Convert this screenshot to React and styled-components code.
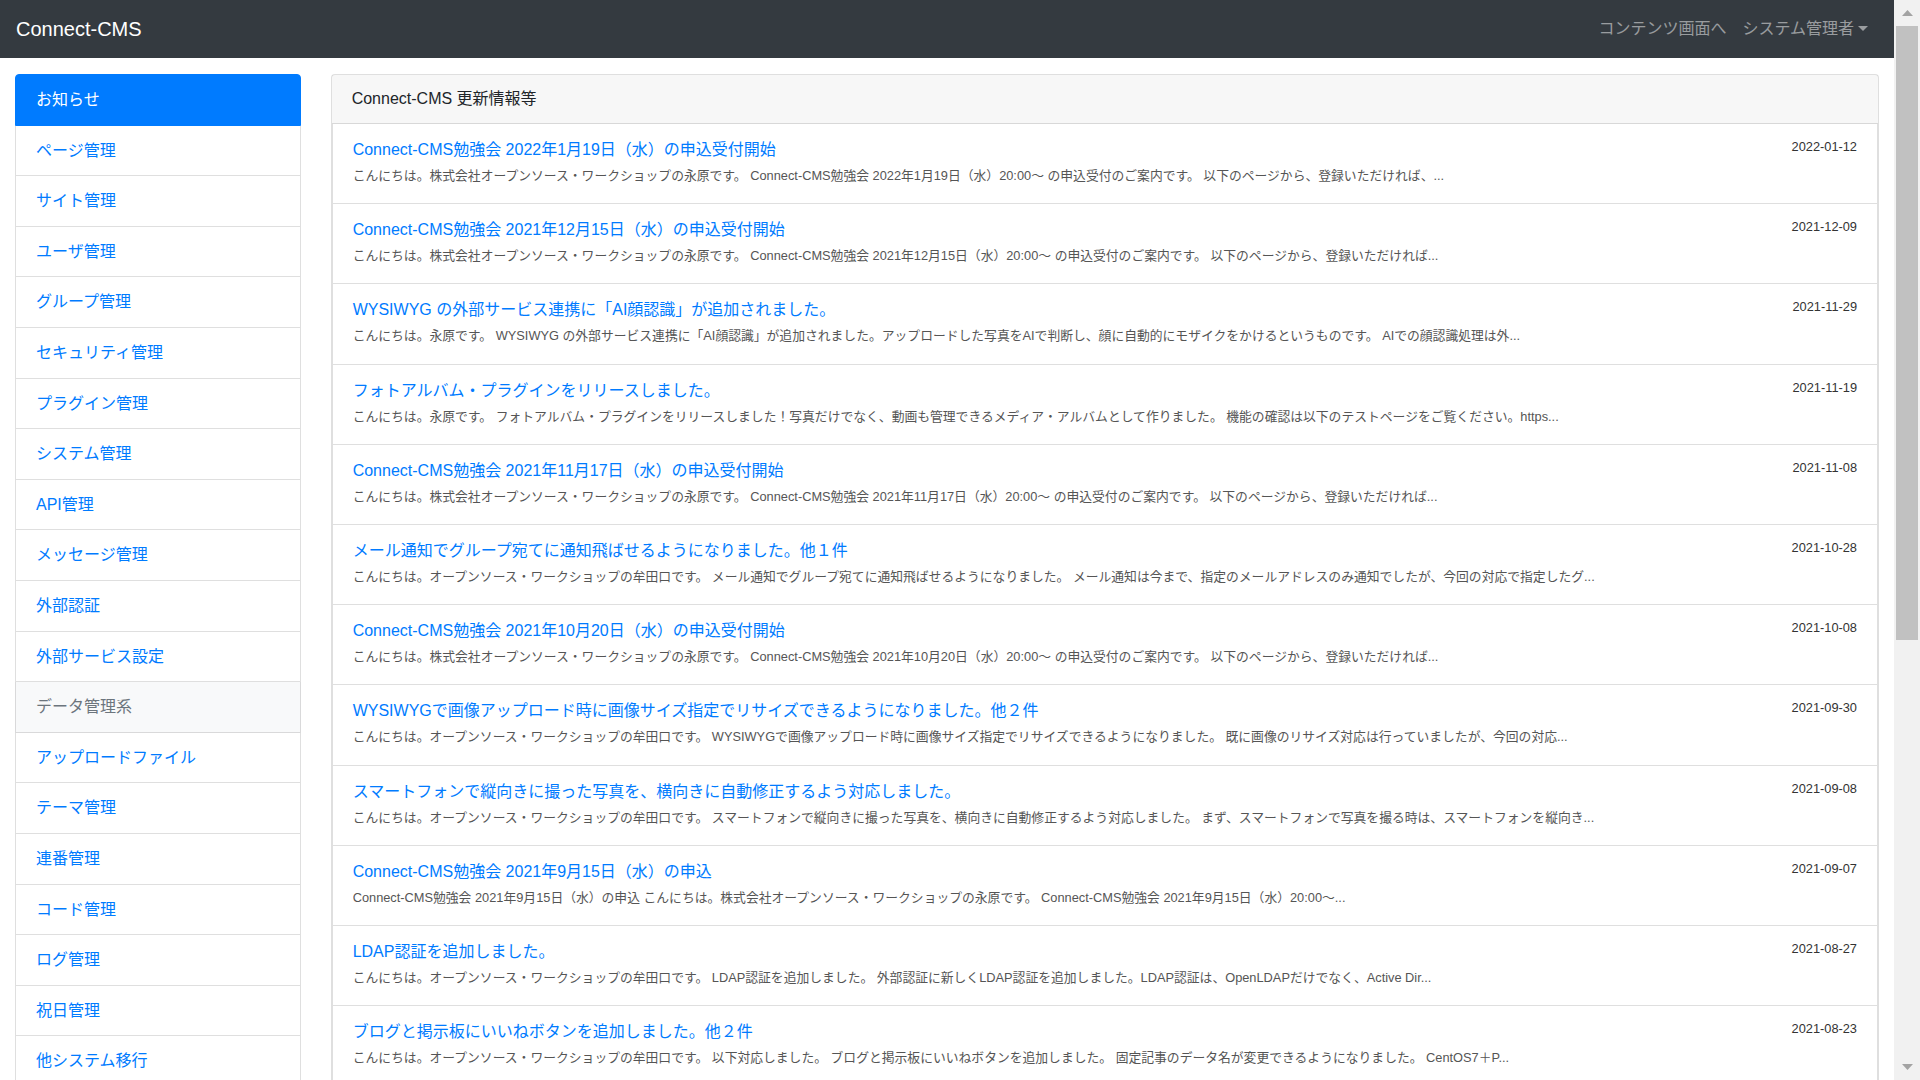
import React from "react";
import styled, { createGlobalStyle, css } from "styled-components";

const GlobalStyle = createGlobalStyle`
  html, body {
    margin: 0;
    padding: 0;
    overflow: hidden;
    background: #fff;
  }
  body {
    font-family: "Liberation Sans", "Noto Sans CJK JP", sans-serif;
    font-size: 16px;
    line-height: 1.5;
    color: #212529;
  }
  * { box-sizing: border-box; }
`;

const Viewport = styled.div`
  display: flex;
  height: 100vh;
  overflow: hidden;
`;

const Page = styled.div`
  flex: 1;
  min-width: 0;
  overflow: hidden;
`;

const Navbar = styled.nav`
  height: 58px;
  background: #343a40;
  display: flex;
  align-items: center;
  justify-content: space-between;
  padding: 0 18px 0 16px;
`;

const Brand = styled.a`
  font-size: 20px;
  line-height: 30px;
  color: #fff;
  text-decoration: none;
  padding-bottom: 1px;
`;

const NavLinks = styled.div`
  display: flex;
  align-items: center;
`;

const NavLink = styled.a`
  padding: 8px;
  font-size: 16px;
  line-height: 24px;
  color: rgba(255, 255, 255, 0.5);
  text-decoration: none;
  display: inline-flex;
  align-items: center;
`;

const Caret = styled.span`
  display: inline-block;
  margin-left: 4px;
  width: 0;
  height: 0;
  border-top: 5px solid rgba(255, 255, 255, 0.5);
  border-left: 5px solid transparent;
  border-right: 5px solid transparent;
  margin-top: -2px;
`;

const Container = styled.div`
  display: flex;
  margin-top: 16px;
`;

const SideCol = styled.div`
  flex: 0 0 16.6667%;
  max-width: 16.6667%;
  padding: 0 15px;
`;

const MainCol = styled.div`
  flex: 1;
  min-width: 0;
  padding: 0 15px;
`;

const SideList = styled.div`
  display: flex;
  flex-direction: column;
`;

const SideItem = styled.a`
  display: block;
  padding: 12px 20px;
  font-size: 16px;
  line-height: 25.6px;
  color: #007bff;
  text-decoration: none;
  background: #fff;
  border: 1px solid rgba(0, 0, 0, 0.125);
  white-space: nowrap;
  & + & {
    border-top-width: 0;
  }
  ${(p) =>
    p.$active &&
    css`
      background: #007bff;
      border-color: #007bff;
      color: #fff;
      border-top-left-radius: 4px;
      border-top-right-radius: 4px;
    `}
  ${(p) =>
    p.$heading &&
    css`
      background: #f8f9fa;
      color: #6c757d;
    `}
`;

const Card = styled.div`
  border: 1px solid rgba(0, 0, 0, 0.125);
  border-radius: 4px;
  background: #fff;
`;

const CardHeader = styled.div`
  padding: 12px 20px;
  line-height: 24px;
  font-size: 16px;
  color: #212529;
  background: rgba(0, 0, 0, 0.03);
  border-bottom: 1px solid rgba(0, 0, 0, 0.125);
`;

const NewsItem = styled.div`
  display: flex;
  align-items: flex-start;
  justify-content: space-between;
  padding: 14px 20px 18px;
  border: 1px solid rgba(0, 0, 0, 0.125);
  border-top-width: 0;
`;

const NewsBody = styled.div`
  flex: 1;
  min-width: 0;
`;

const NewsTitle = styled.a`
  display: block;
  font-size: 16px;
  line-height: 24px;
  color: #007bff;
  text-decoration: none;
  white-space: nowrap;
`;

const NewsDesc = styled.div`
  margin-top: 4px;
  font-size: 12.8px;
  line-height: 19.2px;
  color: #555;
  white-space: nowrap;
  overflow: hidden;
`;

const NewsDate = styled.div`
  margin: -1px 0 0 16px;
  font-size: 12.8px;
  line-height: 19.2px;
  color: #333;
  white-space: nowrap;
`;

const Scrollbar = styled.div`
  flex: 0 0 26px;
  height: 100vh;
  background: #f1f1f1;
  display: flex;
  flex-direction: column;
`;

const ScrollButton = styled.div`
  height: 26px;
  display: flex;
  align-items: center;
  justify-content: center;
`;

const ScrollThumb = styled.div`
  height: 614px;
  margin: 0 2px;
  background: #c1c1c1;
`;

const ScrollTrack = styled.div`
  flex: 1;
`;

const Arrow = ({ down }) => (
  <svg width="11" height="6" viewBox="0 0 11 6">
    {down ? (
      <polygon points="0,0 11,0 5.5,6" fill="#a3a3a3" />
    ) : (
      <polygon points="0,6 11,6 5.5,0" fill="#a3a3a3" />
    )}
  </svg>
);

const sideItems = [
  { label: "お知らせ", active: true },
  { label: "ページ管理" },
  { label: "サイト管理" },
  { label: "ユーザ管理" },
  { label: "グループ管理" },
  { label: "セキュリティ管理" },
  { label: "プラグイン管理" },
  { label: "システム管理" },
  { label: "API管理" },
  { label: "メッセージ管理" },
  { label: "外部認証" },
  { label: "外部サービス設定" },
  { label: "データ管理系", heading: true },
  { label: "アップロードファイル" },
  { label: "テーマ管理" },
  { label: "連番管理" },
  { label: "コード管理" },
  { label: "ログ管理" },
  { label: "祝日管理" },
  { label: "他システム移行" },
];

const news = [
  {
    date: "2022-01-12",
    title: "Connect-CMS勉強会 2022年1月19日（水）の申込受付開始",
    desc: "こんにちは。株式会社オープンソース・ワークショップの永原です。 Connect-CMS勉強会 2022年1月19日（水）20:00～ の申込受付のご案内です。 以下のページから、登録いただければ、...",
  },
  {
    date: "2021-12-09",
    title: "Connect-CMS勉強会 2021年12月15日（水）の申込受付開始",
    desc: "こんにちは。株式会社オープンソース・ワークショップの永原です。 Connect-CMS勉強会 2021年12月15日（水）20:00～ の申込受付のご案内です。 以下のページから、登録いただければ...",
  },
  {
    date: "2021-11-29",
    title: "WYSIWYG の外部サービス連携に「AI顔認識」が追加されました。",
    desc: "こんにちは。永原です。 WYSIWYG の外部サービス連携に「AI顔認識」が追加されました。アップロードした写真をAIで判断し、顔に自動的にモザイクをかけるというものです。 AIでの顔認識処理は外...",
  },
  {
    date: "2021-11-19",
    title: "フォトアルバム・プラグインをリリースしました。",
    desc: "こんにちは。永原です。 フォトアルバム・プラグインをリリースしました！写真だけでなく、動画も管理できるメディア・アルバムとして作りました。 機能の確認は以下のテストページをご覧ください。https...",
  },
  {
    date: "2021-11-08",
    title: "Connect-CMS勉強会 2021年11月17日（水）の申込受付開始",
    desc: "こんにちは。株式会社オープンソース・ワークショップの永原です。 Connect-CMS勉強会 2021年11月17日（水）20:00～ の申込受付のご案内です。 以下のページから、登録いただければ...",
  },
  {
    date: "2021-10-28",
    title: "メール通知でグループ宛てに通知飛ばせるようになりました。他１件",
    desc: "こんにちは。オープンソース・ワークショップの牟田口です。 メール通知でグループ宛てに通知飛ばせるようになりました。 メール通知は今まで、指定のメールアドレスのみ通知でしたが、今回の対応で指定したグ...",
  },
  {
    date: "2021-10-08",
    title: "Connect-CMS勉強会 2021年10月20日（水）の申込受付開始",
    desc: "こんにちは。株式会社オープンソース・ワークショップの永原です。 Connect-CMS勉強会 2021年10月20日（水）20:00～ の申込受付のご案内です。 以下のページから、登録いただければ...",
  },
  {
    date: "2021-09-30",
    title: "WYSIWYGで画像アップロード時に画像サイズ指定でリサイズできるようになりました。他２件",
    desc: "こんにちは。オープンソース・ワークショップの牟田口です。 WYSIWYGで画像アップロード時に画像サイズ指定でリサイズできるようになりました。 既に画像のリサイズ対応は行っていましたが、今回の対応...",
  },
  {
    date: "2021-09-08",
    title: "スマートフォンで縦向きに撮った写真を、横向きに自動修正するよう対応しました。",
    desc: "こんにちは。オープンソース・ワークショップの牟田口です。 スマートフォンで縦向きに撮った写真を、横向きに自動修正するよう対応しました。 まず、スマートフォンで写真を撮る時は、スマートフォンを縦向き...",
  },
  {
    date: "2021-09-07",
    title: "Connect-CMS勉強会 2021年9月15日（水）の申込",
    desc: "Connect-CMS勉強会 2021年9月15日（水）の申込 こんにちは。株式会社オープンソース・ワークショップの永原です。 Connect-CMS勉強会 2021年9月15日（水）20:00～...",
  },
  {
    date: "2021-08-27",
    title: "LDAP認証を追加しました。",
    desc: "こんにちは。オープンソース・ワークショップの牟田口です。 LDAP認証を追加しました。 外部認証に新しくLDAP認証を追加しました。LDAP認証は、OpenLDAPだけでなく、Active Dir...",
  },
  {
    date: "2021-08-23",
    title: "ブログと掲示板にいいねボタンを追加しました。他２件",
    desc: "こんにちは。オープンソース・ワークショップの牟田口です。 以下対応しました。 ブログと掲示板にいいねボタンを追加しました。 固定記事のデータ名が変更できるようになりました。 CentOS7＋P...",
  },
];

export default function App() {
  return (
    <>
      <GlobalStyle />
      <Viewport>
        <Page>
          <Navbar>
            <Brand href="#">Connect-CMS</Brand>
            <NavLinks>
              <NavLink href="#">コンテンツ画面へ</NavLink>
              <NavLink href="#">
                システム管理者
                <Caret />
              </NavLink>
            </NavLinks>
          </Navbar>
          <Container>
            <SideCol>
              <SideList>
                {sideItems.map((it) => (
                  <SideItem
                    key={it.label}
                    href="#"
                    $active={it.active}
                    $heading={it.heading}
                  >
                    {it.label}
                  </SideItem>
                ))}
              </SideList>
            </SideCol>
            <MainCol>
              <Card>
                <CardHeader>Connect-CMS 更新情報等</CardHeader>
                {news.map((n) => (
                  <NewsItem key={n.date + n.title}>
                    <NewsBody>
                      <NewsTitle href="#">{n.title}</NewsTitle>
                      <NewsDesc>{n.desc}</NewsDesc>
                    </NewsBody>
                    <NewsDate>{n.date}</NewsDate>
                  </NewsItem>
                ))}
              </Card>
            </MainCol>
          </Container>
        </Page>
        <Scrollbar>
          <ScrollButton>
            <Arrow />
          </ScrollButton>
          <ScrollThumb />
          <ScrollTrack />
          <ScrollButton>
            <Arrow down />
          </ScrollButton>
        </Scrollbar>
      </Viewport>
    </>
  );
}
